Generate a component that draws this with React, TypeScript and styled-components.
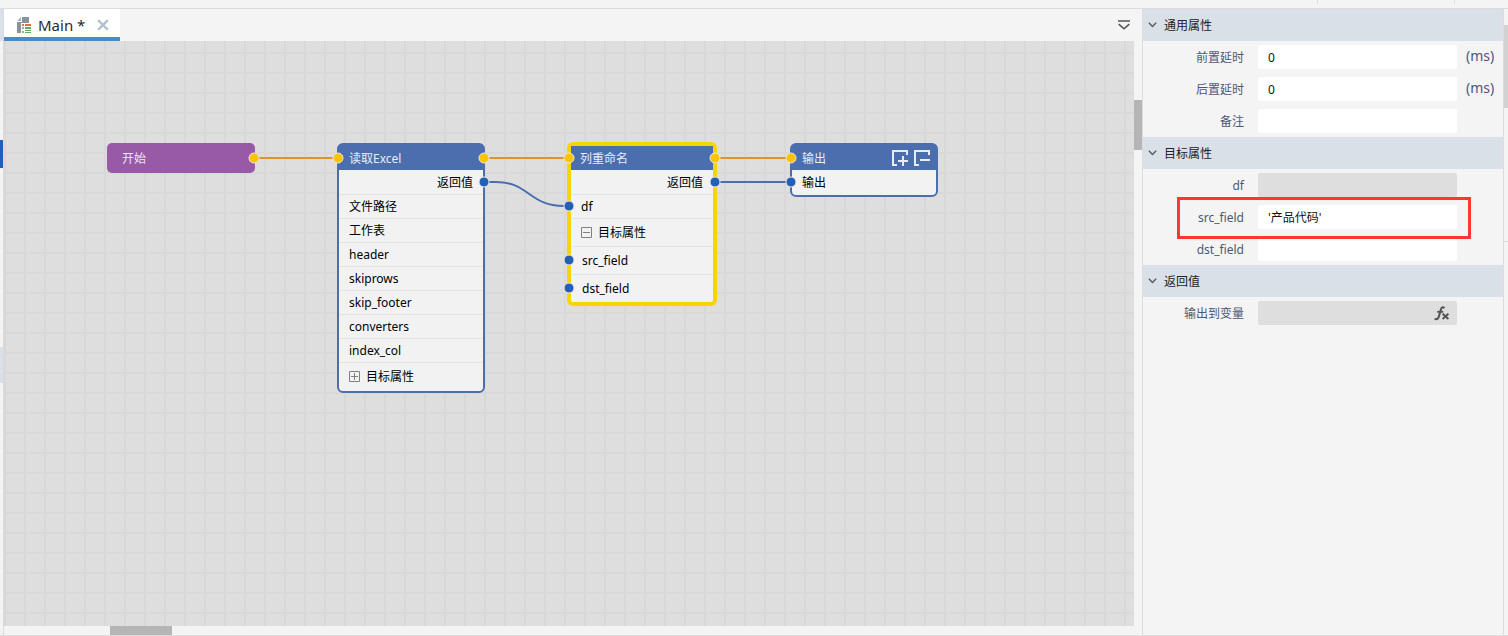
import React from "react";
import styled, { createGlobalStyle, css } from "styled-components";

const GlobalStyle = createGlobalStyle`
  *, *::before, *::after { box-sizing: border-box; }
  body {
    margin: 0;
    background: #f4f4f4;
    color: #000;
    font-family: "Noto Sans", "Noto Sans CJK SC", sans-serif;
    font-size: 12px;
    line-height: 16px;
  }
  button, input { font: inherit; color: inherit; }
  button { border: 0; padding: 0; background: none; cursor: pointer; }
  svg { display: block; flex-shrink: 0; }
`;

const Page = styled.div`
  display: flex;
  flex-direction: column;
  min-height: 100vh;
  border-bottom: 1px solid #dcdcdc;
`;

const TopStrip = styled.header`
  display: flex;
  justify-content: flex-end;
  height: 9px;
  padding-right: 53px;
  border-bottom: 1px solid #dcdcdc;
`;

const TopDivider = styled.span<{ $space?: number }>`
  width: 1px;
  height: 4px;
  margin-right: ${(p) => p.$space ?? 0}px;
  background: #dcdcdc;
`;

const Workspace = styled.div`
  display: flex;
  flex: 1;
`;

const LeftRail = styled.div`
  display: flex;
  flex-direction: column;
  width: 4px;
  border-right: 1px solid #dadada;
`;

const RailMark = styled.span<{ $color: string; $height: number; $gap?: number }>`
  height: ${(p) => p.$height}px;
  margin-top: ${(p) => p.$gap ?? 0}px;
  background: ${(p) => p.$color};
`;

const Editor = styled.main`
  display: flex;
  flex: 1;
  flex-direction: column;
  min-width: 0;
`;

const TabBar = styled.div`
  display: flex;
  align-items: center;
  justify-content: space-between;
  height: 32px;
  padding-right: 12px;
`;

const Tab = styled.div`
  display: flex;
  align-items: center;
  gap: 12px;
  width: 116px;
  height: 32px;
  padding: 4px 0 0 12px;
  border-bottom: 4px solid #4a88c8;
  background: #fff;
`;

const TabTitle = styled.button`
  display: flex;
  align-items: center;
  gap: 6px;
  font-size: 15px;
  line-height: 20px;
  color: #1f2a36;
`;

const CanvasRow = styled.div`
  display: flex;
  flex: 1;
`;

const Canvas = styled.section`
  position: relative;
  flex: 1;
  min-width: 0;
  min-height: 360px;
  overflow: hidden;
  background-color: #dedede;
  background-image: linear-gradient(to right, #d8d8d8 2px, transparent 2px),
    linear-gradient(to bottom, #d8d8d8 2px, transparent 2px);
  background-size: 20px 20px;
  background-position: 0 11px;
`;

const Wires = styled.svg`
  position: absolute;
  top: 0;
  left: 0;
  pointer-events: none;
`;

const VerticalTrack = styled.div`
  width: 8px;
  padding-top: 59px;
`;

const VerticalThumb = styled.div`
  height: 50px;
  background: #b5b5b5;
`;

const HorizontalTrack = styled.div`
  height: 9px;
  padding-left: 106px;
`;

const HorizontalThumb = styled.div`
  width: 62px;
  height: 9px;
  background: #b5b5b5;
`;

const StartNode = styled.article`
  position: absolute;
  width: 148px;
  height: 30px;
  padding: 0 15px;
  border-radius: 5px;
  background: #9859a6;
  color: #efe6f2;
  line-height: 32px;
`;

const Node = styled.article<{ $selected?: boolean }>`
  position: absolute;
  width: ${(p) => (p.$selected ? 150 : 148)}px;
  border: ${(p) => (p.$selected ? "4px solid #fad400" : "2px solid #4b6eaf")};
  border-radius: 6px;
  background: #f2f2f2;
`;

const NodeHeader = styled.header<{ $selected?: boolean }>`
  display: flex;
  align-items: center;
  justify-content: space-between;
  height: ${(p) => (p.$selected ? 24 : 25)}px;
  padding: 2px 6px 0 ${(p) => (p.$selected ? 9 : 10)}px;
  background: #4b6eaf;
  color: #e8ecf5;
`;

const NodeTools = styled.div`
  display: flex;
  gap: 6px;
`;

const NodeRow = styled.div<{ $tall?: boolean; $output?: boolean; $nested?: boolean }>`
  display: flex;
  align-items: center;
  gap: 5px;
  height: ${(p) => (p.$tall ? 28 : 24)}px;
  padding: 0 10px 0 ${(p) => (p.$nested ? 11 : 10)}px;
  border-top: 1px solid #e4e4e4;
  &:first-of-type { border-top-color: transparent; }
  ${(p) =>
    p.$output &&
    css`
      justify-content: flex-end;
    `}
`;

const Toggle = styled.button`
  width: 12px;
  height: 12px;
`;

const Panel = styled.aside`
  width: 362px;
  border: solid #dcdcdc;
  border-width: 0 1px;
`;

const SectionHeader = styled.button`
  display: flex;
  align-items: center;
  gap: 7px;
  width: 100%;
  height: 32px;
  padding-left: 5px;
  background: #dae0e7;
  color: #222;
`;

const SectionTitle = styled.span`
  padding-top: 2px;
`;

const Field = styled.div`
  position: relative;
  display: flex;
  align-items: center;
  height: 32px;
  color: #4e5874;
`;

const Label = styled.label`
  width: 101px;
  margin-right: 14px;
  padding-top: 2px;
  text-align: right;
`;

const TextInput = styled.input`
  width: 199px;
  height: 24px;
  padding: 0 10px;
  border: 0;
  border-radius: 2px;
  background: #fff;
  color: #111;
  &:disabled { background: #dedede; }
`;

const Unit = styled.span`
  margin-left: 9px;
  padding-bottom: 2px;
  font-size: 14px;
`;

const FormulaButton = styled.button`
  position: absolute;
  right: 53px;
`;

const Highlight = styled.div`
  position: absolute;
  inset: -4px 32px -6px 34px;
  z-index: 1;
  border: 3px solid #fd3634;
  pointer-events: none;
`;

const RightRail = styled.div`
  width: 4px;
  padding-top: 16px;
`;

const RightThumb = styled.div`
  height: 83px;
  background: #d2d2d2;
`;

const RightDivider = styled.div`
  height: 1px;
  margin-top: 133px;
  background: #dcdcdc;
`;

const FileIcon = () => (
  <svg width="16" height="16" viewBox="0 0 16 16" aria-hidden="true">
    <path d="M6 0H13V6H5V16H1V5H6Z" fill="#87939d" />
    <path d="M5 0V4H1Z" fill="#a9b2b9" />
    <path d="M6 7H8V9H6ZM9 7H15V9H9Z" fill="#e0703c" />
    <path d="M6 10H8V12H6ZM6 14H8V16H6Z" fill="#b3a284" />
    <path d="M9 10H15V12H9ZM9 13H15V14H9ZM9 15H15V16H9Z" fill="#62ab68" />
  </svg>
);

const CloseIcon = () => (
  <svg width="12" height="12" viewBox="0 0 12 12" aria-hidden="true">
    <path d="M2 2L10 10M10 2L2 10" stroke="#b2c1cb" strokeWidth="2.4" strokeLinecap="square" />
  </svg>
);

const TabsMenuIcon = () => (
  <svg width="12" height="10" viewBox="0 0 12 10" fill="none" stroke="#555" strokeWidth="1.6" aria-hidden="true">
    <path d="M0 1H12M0.7 4.2L6 8.8L11.3 4.2" />
  </svg>
);

const Chevron = () => (
  <svg width="9" height="6" viewBox="0 0 9 6" fill="none" stroke="#555d66" strokeWidth="1.4" aria-hidden="true">
    <path d="M0.8 0.7L4.5 4.6L8.2 0.7" />
  </svg>
);

const ToggleIcon = ({ open }: { open?: boolean }) => (
  <svg width="12" height="12" viewBox="0 0 12 12" fill="none" stroke="#808080" aria-hidden="true">
    <path d={open ? "M.5 .5H10.5V10.5H.5ZM2 5.5H9" : "M.5 .5H10.5V10.5H.5ZM2 5.5H9M5.5 2V9"} />
  </svg>
);

const PortIcon = ({ add }: { add?: boolean }) => (
  <svg width="16" height="17" viewBox="0 0 16 17" fill="none" stroke="#e8ecf5" strokeWidth="2" aria-hidden="true">
    <path d="M5 15H1V1H15V5" />
    <path d={add ? "M6 11H16M11 6V16" : "M6 10H16"} />
  </svg>
);

const FxIcon = () => (
  <svg width="16" height="16" viewBox="0 0 16 16" fill="none" stroke="#555" aria-hidden="true">
    <path d="M10.4 3.2C9.6 1.6 7.7 2 7.1 4L4.7 12C4.1 14.1 2.2 14.8 .8 13.4" strokeWidth="2.1" />
    <path d="M3.2 6.8H9.2" strokeWidth="1.8" />
    <path d="M8.6 8.8L14.4 14M14.4 8.8L8.6 14" strokeWidth="2" />
  </svg>
);

const flowPorts = [[250, 117], [334, 117], [480, 117], [565, 117], [711, 117], [787, 117]];
const dataPorts = [[480, 141], [565, 165], [565, 219], [565, 247], [711, 141], [787, 141]];
const readerFields = ["文件路径", "工作表", "header", "skiprows", "skip_footer", "converters", "index_col"];

const ReaderNode = styled(Node)`
  top: 102px;
  left: 333px;
  ${NodeRow}:last-child { height: 29px; }
`;
const RenameNode = styled(Node)`
  top: 101px;
  left: 563px;
`;
const OutputNode = styled(Node)`
  top: 102px;
  left: 786px;
  ${NodeRow}:last-child { height: 25px; }
`;
const BeginNode = styled(StartNode)`
  top: 102px;
  left: 103px;
`;

interface PropertyProps {
  id: string;
  label: string;
  value?: string;
  unit?: string;
  disabled?: boolean;
  children?: React.ReactNode;
}

const Property = ({ id, label, value = "", unit, disabled, children }: PropertyProps) => (
  <Field>
    <Label htmlFor={id}>{label}</Label>
    <TextInput id={id} type="text" defaultValue={value} disabled={disabled} />
    {unit && <Unit>{unit}</Unit>}
    {children}
  </Field>
);

const Section = ({ title }: { title: string }) => (
  <SectionHeader aria-expanded="true">
    <Chevron />
    <SectionTitle>{title}</SectionTitle>
  </SectionHeader>
);

export default function App() {
  return (
    <>
      <GlobalStyle />
      <Page>
        <TopStrip>
          <TopDivider $space={136} />
          <TopDivider />
        </TopStrip>
        <Workspace>
          <LeftRail>
            <RailMark $color="#dae0e7" $height={32} />
            <RailMark $color="#2360b4" $height={28} $gap={99} />
            <RailMark $color="#dae0e7" $height={36} $gap={179} />
          </LeftRail>
          <Editor>
            <TabBar>
              <Tab>
                <TabTitle>
                  <FileIcon />
                  Main *
                </TabTitle>
                <button aria-label="关闭"><CloseIcon /></button>
              </Tab>
              <button aria-label="标签列表"><TabsMenuIcon /></button>
            </TabBar>
            <CanvasRow>
              <Canvas>
                <BeginNode>开始</BeginNode>
                <ReaderNode>
                  <NodeHeader>读取Excel</NodeHeader>
                  <NodeRow $output>返回值</NodeRow>
                  {readerFields.map((name) => (
                    <NodeRow key={name}>{name}</NodeRow>
                  ))}
                  <NodeRow $tall>
                    <Toggle aria-label="展开"><ToggleIcon /></Toggle>
                    目标属性
                  </NodeRow>
                </ReaderNode>
                <RenameNode $selected>
                  <NodeHeader $selected>列重命名</NodeHeader>
                  <NodeRow $output>返回值</NodeRow>
                  <NodeRow>df</NodeRow>
                  <NodeRow $tall>
                    <Toggle aria-label="折叠"><ToggleIcon open /></Toggle>
                    目标属性
                  </NodeRow>
                  <NodeRow $tall $nested>src_field</NodeRow>
                  <NodeRow $tall $nested>dst_field</NodeRow>
                </RenameNode>
                <OutputNode>
                  <NodeHeader>
                    输出
                    <NodeTools>
                      <button aria-label="添加"><PortIcon add /></button>
                      <button aria-label="移除"><PortIcon /></button>
                    </NodeTools>
                  </NodeHeader>
                  <NodeRow>输出</NodeRow>
                </OutputNode>
                <Wires width="950" height="360" fill="none" aria-hidden="true">
                  <path d="M250 117H334M480 117H565M711 117H787" stroke="#d9962b" strokeWidth="2" />
                  <path d="M480 141H492C525 141 525 165 560 165M711 141H787" stroke="#4b6eaf" strokeWidth="2" />
                  <g stroke="#e8e8e8" strokeWidth="1">
                    {flowPorts.map(([x, y]) => (
                      <circle key={x} cx={x} cy={y} r="5" fill="#ffc400" />
                    ))}
                    {dataPorts.map(([x, y]) => (
                      <circle key={`${x}-${y}`} cx={x} cy={y} r="5" fill="#2360b4" />
                    ))}
                  </g>
                </Wires>
              </Canvas>
              <VerticalTrack><VerticalThumb /></VerticalTrack>
            </CanvasRow>
            <HorizontalTrack><HorizontalThumb /></HorizontalTrack>
          </Editor>
          <Panel>
            <Section title="通用属性" />
            <Property id="delay-before" label="前置延时" value="0" unit="(ms)" />
            <Property id="delay-after" label="后置延时" value="0" unit="(ms)" />
            <Property id="remark" label="备注" />
            <Section title="目标属性" />
            <Property id="df" label="df" disabled />
            <Property id="src-field" label="src_field" value="'产品代码'">
              <Highlight />
            </Property>
            <Property id="dst-field" label="dst_field" />
            <Section title="返回值" />
            <Property id="output-variable" label="输出到变量" disabled>
              <FormulaButton aria-label="公式"><FxIcon /></FormulaButton>
            </Property>
          </Panel>
          <RightRail>
            <RightThumb />
            <RightDivider />
          </RightRail>
        </Workspace>
      </Page>
    </>
  );
}
